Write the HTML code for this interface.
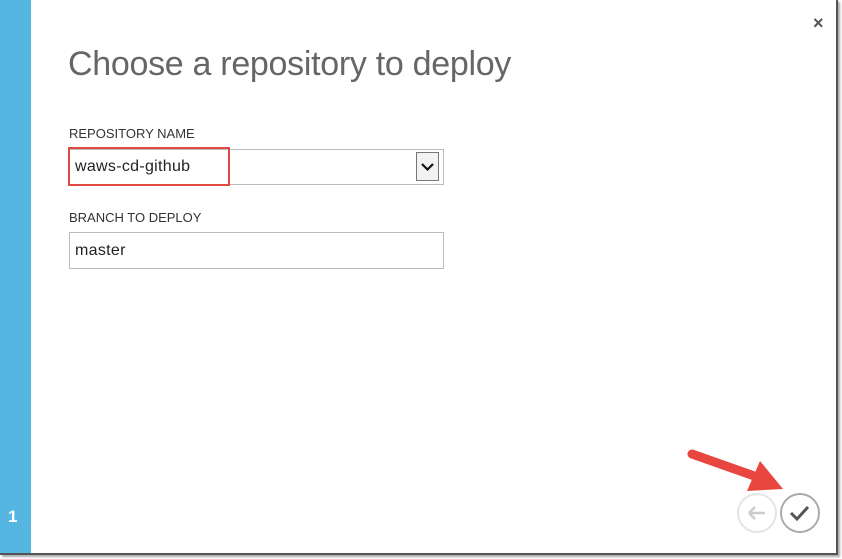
<!DOCTYPE html>
<html><head><style>
body{margin:0;width:842px;height:559px;background:#fff;position:relative;overflow:hidden;font-family:"Liberation Sans",sans-serif}
.frame{position:absolute;left:0;top:0;width:836px;height:553px;border-right:2px solid #555;border-bottom:2px solid #555;box-shadow:2px 2px 2px #aaa;background:#fff}
.side{position:absolute;left:0;top:0;width:31px;height:553px;background:#55b7e1}
.num{position:absolute;left:8px;top:507px;color:#fff;font-weight:bold;font-size:17px}
h1{position:absolute;left:68px;top:45px;margin:0;font-weight:normal;font-size:34px;color:#666;letter-spacing:-0.3px}
.lbl{position:absolute;left:69px;font-size:13px;color:#333}
.box{position:absolute;left:69px;width:375px;height:34px;border:1px solid #bbb;box-sizing:border-box}
.txt{position:absolute;left:75px;font-size:16px;color:#222;letter-spacing:0.3px}
</style></head><body>
<div class="frame"></div>
<div class="side"></div><div class="num">1</div>
<div style="position:absolute;left:813px;top:13px;font-size:18px;font-weight:bold;color:#555">×</div>
<h1>Choose a repository to deploy</h1>
<div class="lbl" style="top:126px">REPOSITORY NAME</div>
<div class="box" style="top:149px;height:36px"></div>
<div style="position:absolute;left:416px;top:152px;width:23px;height:29px;border:1px solid #777;background:#f2f2f2;box-sizing:border-box"><svg width="21" height="27"><path d="M5 11l5.5 5.5 5.5-5.5" stroke="#111" stroke-width="2.2" fill="none"/></svg></div>
<div style="position:absolute;left:68px;top:147px;width:162px;height:39px;border:2px solid #e04a44;box-sizing:border-box"></div>
<div class="txt" style="top:158px">waws-cd-github</div>
<div class="lbl" style="top:210px">BRANCH TO DEPLOY</div>
<div class="box" style="top:232px;height:37px"></div>
<div class="txt" style="top:242px">master</div>
<svg style="position:absolute;left:680px;top:440px" width="150" height="110">
<circle cx="77" cy="73" r="19" fill="none" stroke="#e4e4e4" stroke-width="2"/>
<path d="M69 73h16M69 73l6-6M69 73l6 6" stroke="#ccc" stroke-width="2.5" fill="none"/>
<circle cx="120" cy="73" r="19" fill="none" stroke="#aaa" stroke-width="2"/>
<path d="M111 73l6 6 11-12" stroke="#555" stroke-width="3" fill="none"/>
<path d="M12 14L80 38" stroke="#e8463f" stroke-width="9" stroke-linecap="round"/>
<path d="M80 21L103 49 67 51z" fill="#e8463f"/>
</svg>
</body></html>
